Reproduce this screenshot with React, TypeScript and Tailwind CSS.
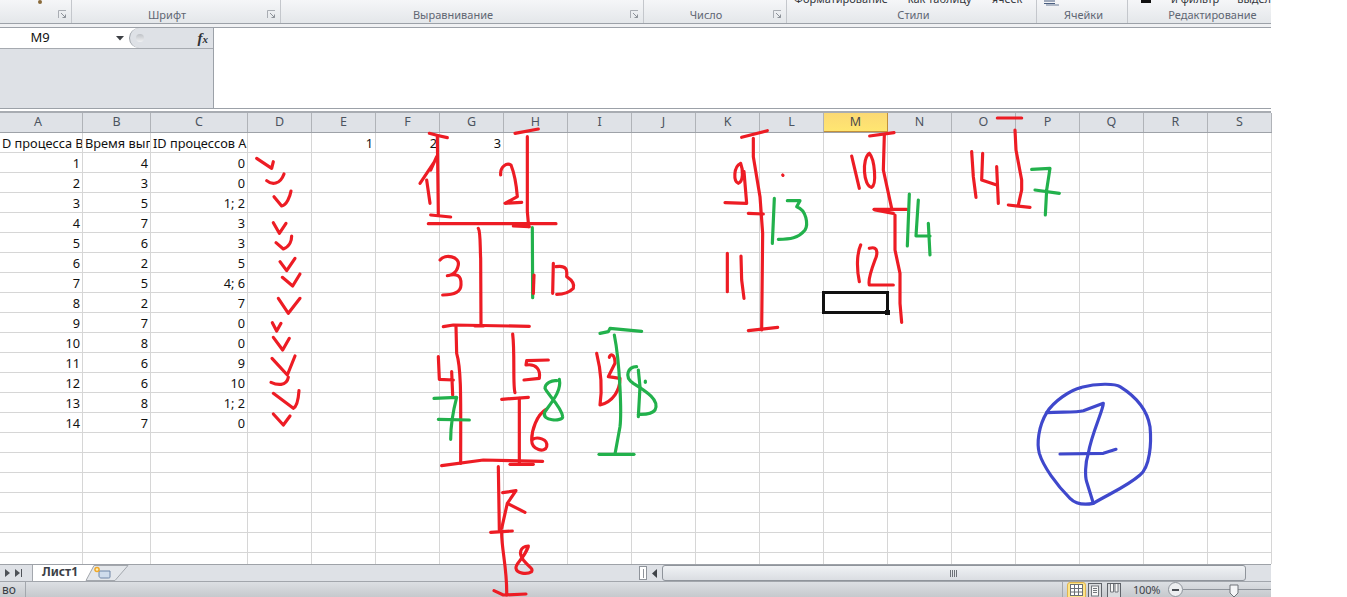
import React from "react";

const COLS: [string, number][] = [
  ["A", 83], ["B", 68], ["C", 97], ["D", 64], ["E", 64], ["F", 64], ["G", 64], ["H", 64], ["I", 64], ["J", 64],
  ["K", 64], ["L", 64], ["M", 64], ["N", 64], ["O", 64], ["P", 64], ["Q", 64], ["R", 64], ["S", 64],
];

const DATA: string[][] = [
  ["1", "4", "0"], ["2", "3", "0"], ["3", "5", "1; 2"], ["4", "7", "3"], ["5", "6", "3"], ["6", "2", "5"], ["7", "5", "4; 6"],
  ["8", "2", "7"], ["9", "7", "0"], ["10", "8", "0"], ["11", "6", "9"], ["12", "6", "10"], ["13", "8", "1; 2"], ["14", "7", "0"],
];

const cellFont = "font-['Noto_Sans',sans-serif] text-[12.75px] leading-[21px] text-[#111111]";

function Launcher() {
  return (
    <svg width="9" height="9" viewBox="0 0 9 9" className="shrink-0">
      <path d="M0.5 8V0.5H8" fill="none" stroke="#a9adb3" />
      <path d="M3 3L7.5 7.5M7.5 4.5V7.5H4.5" fill="none" stroke="#8d9299" />
    </svg>
  );
}

function Group({ w, label, launcher, top, labelClass }: { w: number; label: string; launcher?: boolean; top?: React.ReactNode; labelClass?: string }) {
  return (
    <div className="flex h-full shrink-0 flex-col border-r border-r-[#c4c7cc]" style={{ width: w }}>
      <div className="flex h-[6px] items-end overflow-hidden">{top}</div>
      <div className="flex h-[17px] items-center">
        <span className={"flex-1 pt-[1px] text-center font-['Noto_Sans',sans-serif] text-[11px] text-[#5f6673] " + (labelClass ?? "")}>{label}</span>
        {launcher && <span className="mr-[4px] flex"><Launcher /></span>}
      </div>
    </div>
  );
}

function TopText({ children, className }: { children: React.ReactNode; className?: string }) {
  return (
    <span className={"shrink-0 whitespace-nowrap font-['Noto_Sans',sans-serif] text-[11px] leading-[14px] text-[#33363b] " + (className ?? "")}>
      {children}
    </span>
  );
}

function Ribbon() {
  return (
    <div className="flex h-[23px] w-[1271px] shrink-0 overflow-hidden bg-gradient-to-b from-[#f5f6f8] to-[#e4e7ea]">
      <Group w={72} label="" launcher top={<span className="ml-[38px] mb-[2px] h-[4px] w-[4px] rounded-full bg-[#8a6a3a]" />} />
      <Group w={209} label="Шрифт" labelClass="pr-[5px]" launcher />
      <Group w={363} label="Выравнивание" labelClass="pr-[5px]" launcher />
      <Group w={143} label="Число" labelClass="pr-[5px]" launcher />
      <Group
        w={250}
        label="Стили"
        labelClass="pl-[4px]"
        top={
          <div className="flex gap-[20px] pl-[7px]">
            <TopText>Форматирование</TopText>
            <TopText>как таблицу</TopText>
            <TopText>ячеек</TopText>
          </div>
        }
      />
      <Group
        w={91}
        label="Ячейки"
        labelClass="pl-[3px]"
        top={
          <svg width="24" height="6" viewBox="0 0 24 6" className="ml-[6px]">
            <path d="M1 1H12M1 3.5H12" stroke="#4a5f80" />
            <path d="M3 5H16" stroke="#6f7f98" />
          </svg>
        }
      />
      <div className="flex h-full flex-1 flex-col">
        <div className="flex h-[6px] items-end gap-[18px] overflow-hidden pl-[13px]">
          <span className="mb-[3px] h-[3px] w-[10px] shrink-0 bg-[#111111]" />
          <TopText className="ml-[2px]">и фильтр</TopText>
          <TopText>выделить</TopText>
        </div>
        <div className="flex h-[17px] items-center justify-center pl-[8px] pt-[1px] font-['Noto_Sans',sans-serif] text-[11px] text-[#5f6673]">
          Редактирование
        </div>
      </div>
    </div>
  );
}

function FormulaBar() {
  return (
    <div className="flex h-[81px] w-[1271px] shrink-0 border-b border-b-[#9ca1a8]">
      <div className="flex w-[214px] shrink-0 flex-col border-r border-r-[#9ca1a8] bg-[#dee1e6]">
        <div className="flex h-[21px] shrink-0 border-b border-b-[#a6aab0] bg-white">
          <div className="flex w-[129px] items-center bg-white">
            <span className="w-[80px] text-center font-['Noto_Sans',sans-serif] text-[13px] text-[#111111]">M9</span>
            <svg width="8" height="5" viewBox="0 0 8 5" className="ml-[36px]"><path d="M0 0H8L4 4.5Z" fill="#3c3f44" /></svg>
          </div>
          <div className="flex flex-1 items-center rounded-l-[11px] border-l border-l-[#9ca1a8] bg-[#dee1e6] pl-[6px]">
            <span className="h-[8px] w-[8px] rounded-full bg-gradient-to-b from-[#bfc2c7] to-[#f0f1f3]" />
            <span className="ml-auto mr-[5px] font-['Liberation_Serif',serif] text-[15px] font-bold italic leading-none text-[#2f3236]">f<span className="text-[11px]">x</span></span>
          </div>
        </div>
      </div>
      <div className="flex-1 bg-white" />
    </div>
  );
}

function HeaderRow() {
  return (
    <div className="flex h-[20px] w-[1272px] shrink-0 border-b border-b-[#9ea2a8] bg-[#dfe2e7]">
      {COLS.map(([l, w], i) => (
        <div
          key={l}
          className={
            "flex shrink-0 items-center justify-center border-r font-['Noto_Sans',sans-serif] text-[12.5px] " +
            (l === "M"
              ? "border-b border-[#c2903a] bg-gradient-to-b from-[#fbd974] to-[#ffe671] text-[#4a4a4a]"
              : "border-r-[#b0b3b8] text-[#4c5460]") +
            (i === 0 ? " pr-[6px]" : "")
          }
          style={{ width: w }}
        >
          {l}
        </div>
      ))}
    </div>
  );
}

function cellText(r: number, c: number): { t: string; left?: boolean } | null {
  if (r === 0) {
    if (c === 0) return { t: "D процесса В", left: true };
    if (c === 1) return { t: "Время вып", left: true };
    if (c === 2) return { t: "ID процессов А", left: true };
    if (c === 4) return { t: "1" };
    if (c === 5) return { t: "2" };
    if (c === 6) return { t: "3" };
    return null;
  }
  const row = DATA[r - 1];
  if (row && c < 3) return { t: row[c] };
  return null;
}

function Grid() {
  const rows = Array.from({ length: 22 }, (_, i) => i);
  return (
    <div className="h-[431px] w-[1272px] shrink-0 overflow-hidden bg-white">
      {rows.map((r) => (
        <div key={r} className="flex h-[20px] w-[1272px]">
          {COLS.map(([l, w], c) => {
            const v = cellText(r, c);
            return (
              <div
                key={l}
                className={
                  "relative shrink-0 overflow-hidden whitespace-nowrap border-r border-b border-r-[#d6d6d6] border-b-[#d6d6d6] " +
                  cellFont +
                  (v && !v.left ? " pr-[2px] text-right" : " pl-[2px]")
                }
                style={{ width: w }}
              >
                {v?.t}
              </div>
            );
          })}
        </div>
      ))}
    </div>
  );
}

function SheetTabs() {
  return (
    <div className="flex h-[17px] w-[1271px] shrink-0 items-stretch border-t border-t-[#9ea2a8] bg-[#dee1e6]">
      <div className="flex w-[33px] shrink-0 items-center gap-[5px] border-r border-r-[#a3a7ad] pl-[5px]">
        <svg width="5" height="8" viewBox="0 0 5 8"><path d="M0 0L5 4L0 8Z" fill="#4e5258" /></svg>
        <svg width="8" height="8" viewBox="0 0 8 8"><path d="M0 0L5 4L0 8Z" fill="#4e5258" /><path d="M6.5 0V8" stroke="#4e5258" /></svg>
      </div>
      <div className="flex w-[50px] shrink-0 items-center justify-center border-b-2 border-b-white bg-white pl-[4px] font-['Noto_Sans',sans-serif] text-[12px] font-bold leading-none text-[#3b3f46]">
        Лист1
      </div>
      <svg width="46" height="16" viewBox="0 0 46 16" className="shrink-0">
        <path d="M0 0V16H3L11 0Z" fill="#ffffff" />
        <path d="M3 15.5L11 0.5H45L32 15.5H3Z" fill="#e4e7eb" stroke="#a3a7ad" />
        <path d="M16 6H27V12C27 13 26 13 25 13H18C17 13 16 12 16 11Z" fill="#cfdcec" stroke="#6e86a8" />
        <circle cx="14" cy="4.5" r="2.8" fill="#f0a92c" />
        <circle cx="14" cy="4.5" r="1.2" fill="#fff1b8" />
      </svg>
      <div className="flex flex-1 items-center">
        <div className="ml-[510px] flex h-[14px] w-[8px] items-center justify-center border border-[#8f949b] bg-white">
          <span className="h-[9px] w-[1px] bg-[#8f949b]" />
        </div>
        <svg width="5" height="9" viewBox="0 0 5 9" className="ml-[5px]"><path d="M5 0V9L0 4.5Z" fill="#3f4348" /></svg>
        <div className="ml-[5px] flex h-[16px] w-[584px] items-center justify-center rounded-[3px] border border-[#8f949b] bg-gradient-to-b from-[#f0f2f5] to-[#dadde2]">
          <svg width="8" height="7" viewBox="0 0 8 7"><path d="M0.5 0V7M2.5 0V7M4.5 0V7M6.5 0V7" stroke="#6e7278" /></svg>
        </div>
      </div>
    </div>
  );
}

function StatusBar() {
  return (
    <div className="flex h-[16px] w-[1271px] shrink-0 items-start overflow-hidden border-t border-t-[#a2a6ac] bg-gradient-to-b from-[#dcdfe3] to-[#c6c9cd]">
      <div className="flex h-[16px] w-[26px] shrink-0 items-center border-r border-r-[#a3a7ad] pl-[2px] font-['Noto_Sans',sans-serif] text-[12px] leading-none text-[#3a3e44]">
        во
      </div>
      <div className="ml-[1036px] h-[16px] w-[1px] shrink-0 bg-[#a3a7ad]" />
      <div className="ml-[4px] flex h-[16px] w-[19px] shrink-0 items-center justify-center rounded-t-[3px] border border-[#e0b44f] bg-[#fde58a]">
        <svg width="13" height="12" viewBox="0 0 13 12"><rect x="0.5" y="0.5" width="12" height="11" fill="#fff" stroke="#6a6e74" /><path d="M4.5 0V12M8.5 0V12M0 4.5H13M0 8H13" stroke="#6a6e74" /></svg>
      </div>
      <svg width="14" height="15" viewBox="0 0 14 15" className="ml-[2px] mt-[1px] shrink-0"><rect x="0.5" y="0.5" width="13" height="14" fill="#d9dbde" stroke="#5f6369" /><rect x="3.5" y="3" width="7" height="10" fill="#f7f7f7" stroke="#73777c" /><path d="M5 5.5H9M5 7.5H9M5 9.5H9" stroke="#73777c" /></svg>
      <svg width="14" height="15" viewBox="0 0 14 15" className="ml-[5px] mt-[1px] shrink-0"><rect x="0.5" y="0.5" width="13" height="14" fill="#d9dbde" stroke="#5f6369" /><path d="M3.5 1V9H6.5V1M8 1V9H11V1" fill="#f7f7f7" stroke="#73777c" /></svg>
      <span className="ml-[12px] w-[27px] shrink-0 font-['Noto_Sans',sans-serif] text-[11px] leading-[16px] tracking-[-0.2px] text-[#3f444a]">100%</span>
      <div className="ml-[8px] flex h-[15px] w-[15px] shrink-0 items-center justify-center rounded-full border border-[#8f949b] bg-[#eceef0]">
        <span className="h-[2px] w-[7px] bg-[#4a4e54]" />
      </div>
      <div className="relative mt-[7px] h-[1px] flex-1 bg-[#8f949b]">
        <svg width="10" height="14" viewBox="0 0 10 14" className="absolute left-[46px] top-[-5px]"><path d="M1 1H9V9L5 13L1 9Z" fill="#f4f5f7" stroke="#6f7378" /></svg>
      </div>
    </div>
  );
}

const R = "#ed1c24";
const G = "#22b14c";
const B = "#3f48cc";

const CHECKS = [
  "M770 85L815 115L820 95",
  "M800 152C815 165 840 165 852 132",
  "M822 200L845 228C860 225 870 200 873 183",
  "M820 278L838 310L858 280",
  "M828 338L850 357C870 350 875 330 875 318",
  "M840 395L860 422L885 385",
  "M847 442L878 468L900 432",
  "M835 505L865 550L900 505",
  "M817 578L830 603L843 580",
  "M820 622L848 660L868 625",
  "M816 685L862 735L885 678",
  "M813 757C830 765 860 770 865 742",
  "M820 790L880 835C890 830 895 810 897 782",
  "M820 852L850 885L870 858",
];

const Z5R = [
  "M58 25C75 30 95 35 112 38",
  "M82 35L85 270",
  "M62 270L122 276",
  "M30 175L72 112M80 95L62 135M50 165L60 235",
  "M272 150C270 125 290 112 303 120C315 150 320 190 322 215L285 235L335 232",
  "M315 25L385 12",
  "M352 35L352 260L356 305",
  "M55 296L438 296",
  "M310 303L358 305",
  "M205 310C212 320 210 370 212 400L213 600",
  "M90 405C105 385 150 395 145 420C140 450 115 452 112 452C140 445 155 450 153 480C152 505 120 510 98 510",
  "M372 450L370 505",
  "M430 415L428 505",
  "M438 425C470 420 472 435 470 455C485 465 495 475 490 490C475 505 455 508 440 508",
  "M100 605L130 600L358 604",
  "M195 603L220 603",
];
const Z6R = [
  "M108 20L110 100C125 150 122 250 122 430",
  "M55 110L58 178L100 180M95 155L98 225",
  "M278 42C285 100 278 200 285 218",
  "M385 120L320 122L318 135C350 130 362 150 358 175L312 180",
  "M245 238L325 232",
  "M298 235L298 430",
  "M270 433L340 433",
  "M378 268C350 285 335 330 335 360C335 390 375 400 380 380C385 355 350 350 338 358",
  "M65 437L190 420L368 424",
  "M235 440L238 630M245 640C245 690 262 750 260 825",
  "M248 518L288 512L262 550L245 625M262 550L315 577",
  "M212 637L277 633",
  "M325 678C300 680 295 700 310 720C330 745 340 745 335 755C320 765 290 760 288 745C285 730 310 720 325 680",
  "M222 812L250 825L318 822",
  "M530 100C545 160 545 220 540 255C580 245 600 210 600 175L565 170L585 130C585 100 570 100 568 112",
];
const Z6G = [
  "M42 235L110 232C100 270 92 310 92 358M55 298L148 300",
  "M418 178C425 210 400 240 375 275C360 305 430 305 428 290C425 260 380 220 375 205C375 190 395 180 410 182",
  "M540 40L565 35L570 25L665 34",
  "M583 45C600 130 605 280 600 320L585 402",
  "M537 403L642 403",
  "M655 150L660 200L655 290",
  "M650 140C625 140 610 170 640 190C680 215 720 240 705 270C695 285 670 283 655 283",
  "M676 183L676 187",
];
const Z7R = [
  "M95 82L172 62",
  "M130 85L130 140L150 260L158 370L155 660",
  "M115 662L203 652",
  "M115 310L160 312",
  "M92 160C70 170 70 215 85 220C100 215 100 180 92 160M102 185L110 280L45 278",
  "M218 195L219 196",
  "M52 430L52 545M93 438L95 510L102 565",
  "M479 78L552 68",
  "M523 75L520 180L545 295M555 315L555 420L570 490L570 580L575 637",
  "M492 298L590 298",
  "M495 300L550 310",
  "M425 138L448 235",
  "M478 130C455 145 460 230 485 232C500 225 495 150 478 130",
  "M452 405C440 430 440 480 448 515",
  "M478 415C510 405 500 440 495 450C480 490 475 515 478 525L550 525",
  "M862 24L935 24",
  "M915 60L918 120L935 210L935 240L925 285",
  "M895 285L960 292",
  "M785 125L790 200L798 262",
  "M818 130L815 210L860 225M860 170L865 280",
];
const Z7G = [
  "M193 265L187 400",
  "M232 272L270 272L260 290C290 300 295 345 285 360C265 385 240 388 205 388",
  "M598 252L592 408",
  "M625 270L618 378L660 378M655 340L660 435",
  "M965 178L1020 175L1010 240L1006 315M975 240L1048 250",
];
const Z8B = [
  "M80 128C100 95 150 60 185 52C230 40 285 40 300 50C340 75 380 110 390 170C395 220 390 290 360 315C320 350 270 370 220 400C195 405 170 405 150 385C110 345 70 290 58 250C50 220 55 170 80 128Z",
  "M80 128C120 125 170 128 190 122L250 100C250 120 215 190 205 250C195 280 195 320 200 335L220 400",
  "M120 252L250 250L288 238",
];

function Strokes({ x, y, color, paths, sw = 9.5 }: { x: number; y: number; color: string; paths: string[]; sw?: number }) {
  return (
    <g transform={`translate(${x} ${y}) scale(0.33333)`} fill="none" stroke={color} strokeWidth={sw} strokeLinecap="round" strokeLinejoin="round">
      {paths.map((d, i) => (
        <path key={i} d={d} />
      ))}
    </g>
  );
}

function Ink() {
  return (
    <svg width="1347" height="597" viewBox="0 0 1347 597" className="pointer-events-none absolute left-0 top-0">
      <Strokes x={0} y={130} color={R} paths={CHECKS} />
      <Strokes x={410} y={125} color={G} paths={["M367 308L368 518"]} />
      <Strokes x={410} y={125} color={R} paths={Z5R} />
      <Strokes x={420} y={320} color={R} paths={Z6R} />
      <Strokes x={420} y={320} color={G} paths={Z6G} />
      <Strokes x={710} y={110} color={R} paths={Z7R} />
      <Strokes x={710} y={110} color={G} paths={Z7G} />
      <Strokes x={1020} y={370} color={B} paths={Z8B} />
    </svg>
  );
}

export default function App() {
  return (
    <div className="relative h-[597px] w-[1347px] overflow-hidden bg-white">
      <div className="flex h-[597px] w-[1272px] flex-col overflow-hidden">
        <Ribbon />
        <div className="h-[5px] w-[1271px] shrink-0 border-y border-y-[#9ca1a8] bg-[#f0f1f3]" />
        <FormulaBar />
        <div className="h-[4px] w-[1271px] shrink-0 border-b-2 border-b-[#a8acb2] bg-white" />
        <HeaderRow />
        <Grid />
        <SheetTabs />
        <StatusBar />
      </div>
      <div className="absolute left-[822px] top-[291px] h-[23px] w-[67px] border-[3px] border-[#111111]">
        <span className="absolute bottom-[-4px] right-[-4px] h-[5px] w-[5px] bg-[#111111]" />
      </div>
      <Ink />
    </div>
  );
}
